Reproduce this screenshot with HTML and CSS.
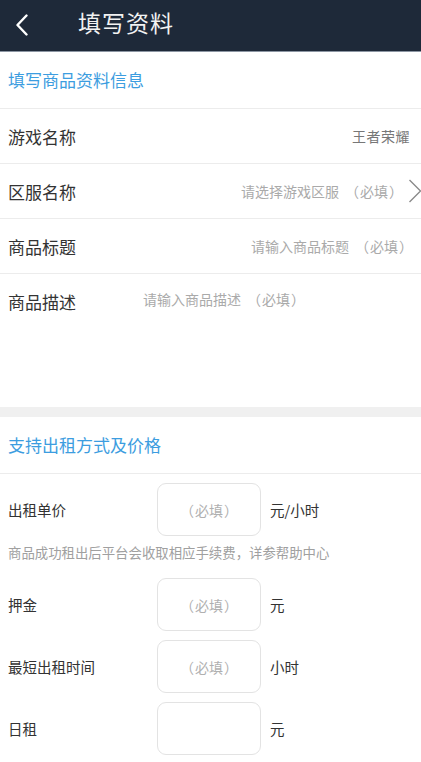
FILE: index.html
```html
<!DOCTYPE html>
<html lang="zh">
<head>
<meta charset="utf-8">
<title>填写资料</title>
<link rel="stylesheet" href="styles.css">
</head>
<body>
<header class="topbar">
  <svg class="back" width="14" height="22" viewBox="0 0 14 22"><path d="M11.5 1.5 L2.5 11 L11.5 20.5" fill="none" stroke="#fff" stroke-width="2.4" stroke-linecap="round" stroke-linejoin="round"/></svg>
  <h1 class="title">填写资料</h1>
</header>

<section class="card">
  <div class="sec-title">填写商品资料信息</div>
  <div class="row">
    <span class="label">游戏名称</span>
    <span class="value">王者荣耀</span>
  </div>
  <div class="row">
    <span class="label">区服名称</span>
    <span class="ph ph-right">请选择游戏区服<span class="lp">（</span>必填<span class="rp">）</span></span>
    <svg class="chev" width="14" height="24" viewBox="0 0 14 24"><path d="M1.5 1 L12.5 12 L1.5 23" fill="none" stroke="#8a8a8a" stroke-width="1.4"/></svg>
  </div>
  <div class="row">
    <span class="label">商品标题</span>
    <span class="ph ph-right ph-pad">请输入商品标题<span class="lp">（</span>必填<span class="rp">）</span></span>
  </div>
  <div class="row row-desc">
    <span class="label">商品描述</span>
    <span class="ph ph-desc">请输入商品描述<span class="lp">（</span>必填<span class="rp">）</span></span>
  </div>
</section>

<div class="gap"></div>

<section class="card">
  <div class="sec-title">支持出租方式及价格</div>
  <div class="prices">
    <div class="prow">
      <span class="plabel">出租单价</span>
      <div class="box"><span class="lp">（</span>必填<span class="rp">）</span></div>
      <span class="unit">元/小时</span>
    </div>
    <p class="note">商品成功租出后平台会收取相应手续费，详参帮助中心</p>
    <div class="prow">
      <span class="plabel">押金</span>
      <div class="box"><span class="lp">（</span>必填<span class="rp">）</span></div>
      <span class="unit">元</span>
    </div>
    <div class="prow">
      <span class="plabel">最短出租时间</span>
      <div class="box"><span class="lp">（</span>必填<span class="rp">）</span></div>
      <span class="unit">小时</span>
    </div>
    <div class="prow">
      <span class="plabel">日租</span>
      <div class="box"></div>
      <span class="unit">元</span>
    </div>
  </div>
</section>
</body>
</html>
```

FILE: styles.css
```css
* { box-sizing: border-box; }
html, body { margin: 0; padding: 0; }
body {
  background: #fff;
  font-family: "Noto Sans CJK SC", "Noto Sans", sans-serif;
  color: #333;
  width: 421px;
  overflow: hidden;
}
.topbar {
  height: 52px;
  background: #1e2939;
  border-bottom: 1px solid #8c96a3;
  display: flex;
  align-items: center;
  padding-left: 15px;
}
.back { display: block; margin-top: -2px; }
.title {
  margin: 0 0 0 49px;
  font-size: 23px;
  font-weight: 400;
  color: #f2f2f2;
  letter-spacing: 1px;
  line-height: 1;
  margin-top: -6px;
}
.sec-title {
  height: 57px;
  display: flex;
  align-items: center;
  padding-left: 8px;
  font-size: 17px;
  color: #3c9de0;
  border-bottom: 1px solid #ececec;
  padding-bottom: 1px;
}
.row {
  height: 55px;
  display: flex;
  align-items: center;
  padding-left: 8px;
  border-bottom: 1px solid #ececec;
  position: relative;
}
.label {
  font-size: 17px;
  color: #333;
  flex: none;
}
.value {
  margin-left: auto;
  margin-right: 11px;
  font-size: 14px;
  letter-spacing: 0.5px;
  color: #777;
}
.ph {
  font-size: 14px;
  color: #aaa;
}
.lp { padding-left: 6px; padding-right: 1px; }
.rp { padding-left: 1px; padding-right: 6px; }
.ph-right { margin-left: auto; margin-right: -1px; }
.ph-pad { margin-right: 2px; }
.chev { flex: none; margin-right: -1px; }
.row-desc {
  height: 133px;
  align-items: flex-start;
  padding-top: 15px;
  border-bottom: none;
}
.ph-desc { margin-left: 67px; margin-top: 0; }
.gap {
  height: 10px;
  background: #f0f0f0;
}
.prices {
  padding: 9px 0 0 8px;
}
.prow {
  display: flex;
  align-items: center;
  height: 53px;
  margin-bottom: 9px;
}
.plabel {
  width: 149px;
  font-size: 14.5px;
  color: #333;
}
.box {
  width: 104px;
  height: 53px;
  border: 1px solid #e3e3e3;
  border-radius: 9px;
  display: flex;
  align-items: center;
  justify-content: center;
  font-size: 14px;
  color: #b0b0b0;
}
.unit {
  margin-left: 9px;
  font-size: 14.5px;
  color: #333;
}
.note {
  margin: -1px 0 17px;
  font-size: 13.4px;
  color: #a0a0a0;
  line-height: 17px;
}
```
